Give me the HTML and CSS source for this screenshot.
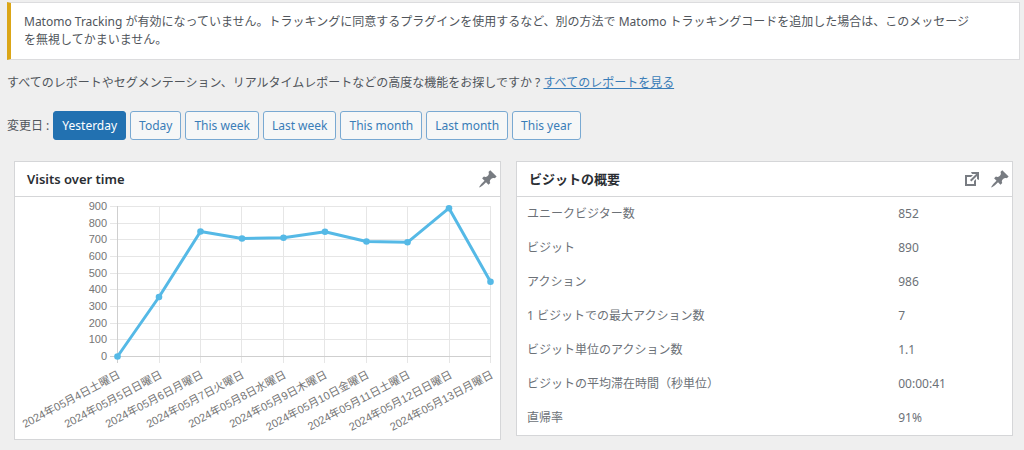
FILE: index.html
```html
<!DOCTYPE html>
<html lang="ja">
<head>
<meta charset="utf-8">
<meta name="viewport" content="width=device-width, initial-scale=1">
<title>Matomo</title>
<link rel="stylesheet" href="styles.css">
</head>
<body>
<div class="notice">
  <p>Matomo Tracking が有効になっていません。トラッキングに同意するプラグインを使用するなど、別の方法で Matomo トラッキングコードを追加した場合は、このメッセージ<br>を無視してかまいません。</p>
</div>
<p class="intro">すべてのレポートやセグメンテーション、リアルタイムレポートなどの高度な機能をお探しですか ? <a href="#">すべてのレポートを見る</a></p>
<div class="dates">
  <span class="dates-label">変更日 :</span>
  <button type="button" class="button primary">Yesterday</button>
  <button type="button" class="button">Today</button>
  <button type="button" class="button">This week</button>
  <button type="button" class="button">Last week</button>
  <button type="button" class="button">This month</button>
  <button type="button" class="button">Last month</button>
  <button type="button" class="button">This year</button>
</div>
<svg class="defs" width="0" height="0" aria-hidden="true">
  <symbol id="pin" viewBox="0 0 20 20"><path d="M10.44 3.02l1.82-1.82 6.36 6.35-1.83 1.82c-1.05-.68-2.48-.57-3.41.36l-.75.75c-.92.93-1.04 2.35-.35 3.41l-1.83 1.82-2.41-2.41-2.8 2.79c-.42.42-3.38 2.71-3.8 2.29s1.86-3.39 2.28-3.81l2.79-2.79L4.1 9.36l1.83-1.82c1.05.69 2.48.57 3.4-.36l.75-.75c.93-.92 1.05-2.35.36-3.41z"/></symbol>
  <symbol id="external" viewBox="0 0 20 20"><path d="M9 3h8v8l-2-1V6.92l-5.6 5.59-1.41-1.41L14.08 5H10zm3 12v-3l2-2v7H3V6h8L9 8H5v7h7z"/></symbol>
</svg>
<main class="panels">
  <section class="panel">
    <header class="panel-head">
      <h2>Visits over time</h2>
      <button type="button" class="icon" aria-label="Pin"><svg><use href="#pin"/></svg></button>
    </header>
    <svg class="chart" viewBox="-1 0 485 242" role="img" aria-label="Visits over time">
      <path class="grid" d="M94 9.5H474.5M94 26.5H474.5M94 42.5H474.5M94 59.5H474.5M94 76.5H474.5M94 92.5H474.5M94 109.5H474.5M94 126.5H474.5M94 142.5H474.5"/>
      <path class="grid" d="M143.5 9V166M184.5 9V166M225.5 9V166M267.5 9V166M308.5 9V166M350.5 9V166M391.5 9V166M433.5 9V166M474.5 9V166"/>
      <path class="axis" d="M101.5 9V166M94 159.5H475"/>
      <g class="ticks">
        <text x="91" y="13">900</text><text x="91" y="30">800</text><text x="91" y="46">700</text><text x="91" y="63">600</text><text x="91" y="80">500</text><text x="91" y="96">400</text><text x="91" y="113">300</text><text x="91" y="130">200</text><text x="91" y="146">100</text><text x="91" y="163">0</text>
      </g>
      <g class="ticks">
        <text transform="translate(105 180) rotate(-28)">2024年05月4日土曜日</text>
        <text transform="translate(147 180) rotate(-28)">2024年05月5日日曜日</text>
        <text transform="translate(188 180) rotate(-28)">2024年05月6日月曜日</text>
        <text transform="translate(229 180) rotate(-28)">2024年05月7日火曜日</text>
        <text transform="translate(271 180) rotate(-28)">2024年05月8日水曜日</text>
        <text transform="translate(312 180) rotate(-28)">2024年05月9日木曜日</text>
        <text transform="translate(354 180) rotate(-28)">2024年05月10日金曜日</text>
        <text transform="translate(395 180) rotate(-28)">2024年05月11日土曜日</text>
        <text transform="translate(437 180) rotate(-28)">2024年05月12日日曜日</text>
        <text transform="translate(478 180) rotate(-28)">2024年05月13日月曜日</text>
      </g>
      <polyline class="line" points="101.5,159.5 143,100 184.5,34.5 226,41.5 267.5,40.8 309,34.8 350.5,44.5 391.5,45.3 433,11.2 474.5,84.8"/>
      <g class="dots">
        <circle cx="101.5" cy="159.5" r="3.3"/><circle cx="143" cy="100" r="3.3"/><circle cx="184.5" cy="34.5" r="3.3"/><circle cx="226" cy="41.5" r="3.3"/><circle cx="267.5" cy="40.8" r="3.3"/><circle cx="309" cy="34.8" r="3.3"/><circle cx="350.5" cy="44.5" r="3.3"/><circle cx="391.5" cy="45.3" r="3.3"/><circle cx="433" cy="11.2" r="3.3"/><circle cx="474.5" cy="84.8" r="3.3"/>
      </g>
    </svg>
  </section>
  <section class="panel">
    <header class="panel-head">
      <h2>ビジットの概要</h2>
      <a href="#" class="icon" aria-label="Open report"><svg><use href="#external"/></svg></a>
      <button type="button" class="icon" aria-label="Pin"><svg><use href="#pin"/></svg></button>
    </header>
    <table class="stats">
      <tbody>
        <tr><th scope="row">ユニークビジター数</th><td>852</td></tr>
        <tr><th scope="row">ビジット</th><td>890</td></tr>
        <tr><th scope="row">アクション</th><td>986</td></tr>
        <tr><th scope="row">1 ビジットでの最大アクション数</th><td>7</td></tr>
        <tr><th scope="row">ビジット単位のアクション数</th><td>1.1</td></tr>
        <tr><th scope="row">ビジットの平均滞在時間（秒単位）</th><td>00:00:41</td></tr>
        <tr><th scope="row">直帰率</th><td>91%</td></tr>
      </tbody>
    </table>
  </section>
</main>
</body>
</html>
```
FILE: styles.css
```css
* { box-sizing: border-box; }
body {
  margin: 0;
  padding: 2px 4px 10px 7px;
  background: #efefef;
  color: #50555b;
  font: 12px/18px "Noto Sans", "Noto Sans CJK JP", sans-serif;
}
p, h2 { margin: 0; }
.notice {
  padding: 10px 13px;
  background: #fff;
  border: 1px solid #dcdcde;
  border-left: 4px solid #dba617;
}
.intro { margin-top: 14px; }
.intro a { color: #3a7db8; text-decoration: underline; }
.dates {
  display: flex;
  flex-wrap: wrap;
  align-items: center;
  gap: 4px;
  margin-top: 19px;
}
.button {
  height: 29px;
  padding: 0 8px;
  border: 1px solid #79a9d2;
  border-radius: 3px;
  background: #f6f7f7;
  color: #3a7db8;
  font: inherit;
}
.button.primary {
  background: #2271b1;
  border-color: #2271b1;
  color: #fff;
}
.defs { position: absolute; }
.panels {
  display: grid;
  grid-template-columns: 487fr 497fr;
  align-items: start;
  gap: 15px;
  margin: 21px 7px 0;
}
.panel {
  min-width: 0;
  background: #fff;
  border: 1px solid #d5d6d8;
}
.panel-head {
  display: flex;
  align-items: center;
  gap: 8px;
  height: 35px;
  padding: 0 2px 0 12px;
  border-bottom: 1px solid #d5d6d8;
}
.panel-head h2 {
  flex: 1;
  color: #2a2e33;
  font-size: 13px;
  font-weight: 600;
}
.icon {
  width: 20px;
  height: 20px;
  padding: 0;
  border: 0;
  background: none;
  color: #787c82;
}
.icon svg {
  display: block;
  width: 20px;
  height: 20px;
  fill: currentColor;
}
.chart { display: block; width: 100%; }
.grid { stroke: #e6e6e6; }
.axis { stroke: #cfcfcf; }
.grid, .axis { fill: none; }
.ticks {
  fill: #757575;
  font: 11px "Liberation Sans", "Noto Sans CJK JP", sans-serif;
  text-anchor: end;
}
.line {
  fill: none;
  stroke: #55b9e6;
  stroke-width: 3;
  stroke-linejoin: round;
}
.dots { fill: #55b9e6; }
.stats {
  width: 100%;
  border-collapse: collapse;
  color: #6c7177;
}
.stats th, .stats td {
  height: 34px;
  padding: 0 10px;
  font-weight: 400;
  text-align: left;
}
.stats th { width: 75%; }
```
